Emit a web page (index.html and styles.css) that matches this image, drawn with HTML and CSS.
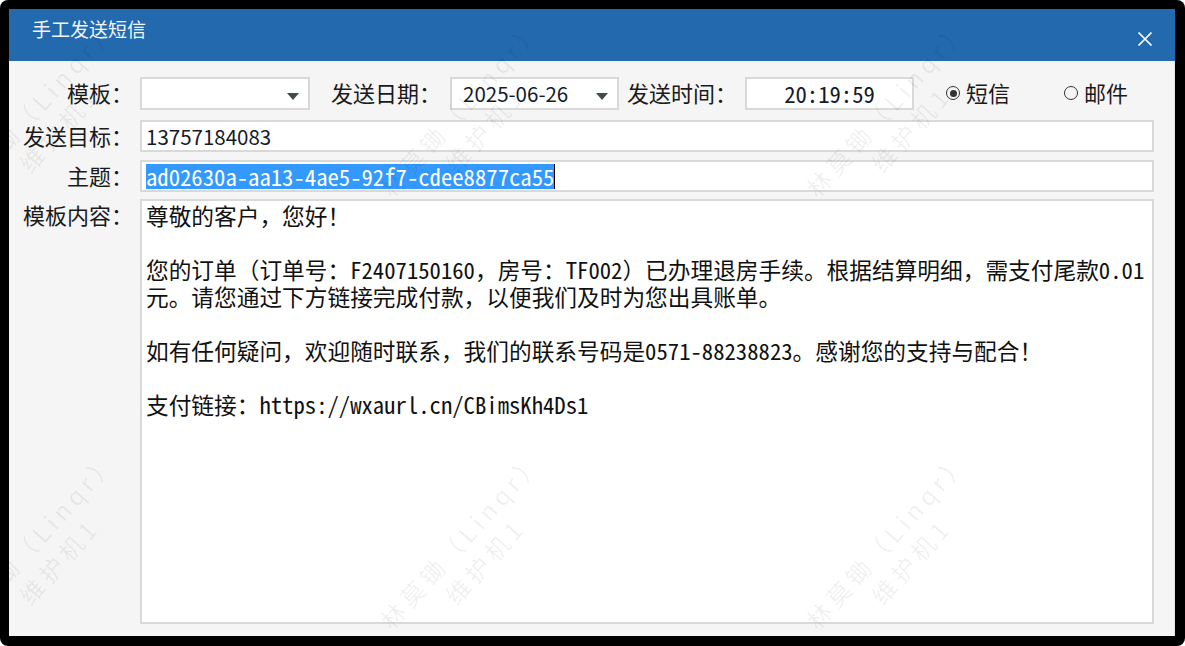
FILE: index.html
```html
<!DOCTYPE html>
<html lang="zh-CN">
<head>
  <meta charset="UTF-8" />
  <title>手工发送短信</title>
  <link rel="stylesheet" href="styles.css">
</head>
<body>

<div class="screen">
  <div class="dialog">

    <!-- TITLE BAR -->
    <div class="title-bar">
      <span class="title">手工发送短信</span>
      <svg class="close-btn" width="16" height="16" viewBox="0 0 16 16">
        <path d="M1.5 1.5 L14.5 14.5 M14.5 1.5 L1.5 14.5" stroke="#fff" stroke-width="1.7" fill="none" />
      </svg>
    </div>

    <!-- FORM -->
    <div class="dialog-body">
      <div class="row row-top">
        <span class="field-label">模板：</span>
        <div class="box combo combo-template"><span class="arrow"></span></div>
        <span class="inline-label label-date">发送日期：</span>
        <div class="box combo combo-date"><span class="value">2025-06-26</span><span class="arrow"></span></div>
        <span class="inline-label label-time">发送时间：</span>
        <div class="box time-box">20:19:59</div>
        <div class="radio-item radio-sms"><span class="radio checked"></span><span>短信</span></div>
        <div class="radio-item radio-mail"><span class="radio"></span><span>邮件</span></div>
      </div>

      <div class="row row-target">
        <span class="field-label">发送目标：</span>
        <div class="box text-box">13757184083</div>
      </div>

      <div class="row row-subject">
        <span class="field-label">主题：</span>
        <div class="box text-box mono"><span class="selected">ad02630a-aa13-4ae5-92f7-cdee8877ca55</span></div>
      </div>

      <div class="row row-content">
        <span class="field-label content-label">模板内容：</span>
        <div class="box content-box mono">尊敬的客户，您好！

您的订单（订单号：F2407150160，房号：TF002）已办理退房手续。根据结算明细，需支付尾款0.01
元。请您通过下方链接完成付款，以便我们及时为您出具账单。

如有任何疑问，欢迎随时联系，我们的联系号码是0571-88238823。感谢您的支持与配合！

支付链接：https://wxaurl.cn/CBimsKh4Ds1</div>
      </div>
    </div>

    <!-- WATERMARK -->
    <div class="watermarks">
      <div class="wm wm-1">林莫锄（Linqr）<br>维护机1</div>
      <div class="wm wm-2">林莫锄（Linqr）<br>维护机1</div>
      <div class="wm wm-3">林莫锄（Linqr）<br>维护机1</div>
      <div class="wm wm-4">林莫锄（Linqr）<br>维护机1</div>
      <div class="wm wm-5">林莫锄（Linqr）<br>维护机1</div>
      <div class="wm wm-6">林莫锄（Linqr）<br>维护机1</div>
    </div>

  </div>
</div>

</body>
</html>
```

FILE: styles.css
```css
html, body {
  margin: 0;
  padding: 0;
  width: 100%;
  height: 100%;
  overflow: hidden;
  background: #fff;
  font-family: "Noto Sans CJK SC", sans-serif;
}

.screen {
  width: 1185px;
  height: 646px;
  box-sizing: border-box;
  background: #000;
  border-radius: 8px;
  padding: 9px 10px 10px 9px;
}

.dialog {
  position: relative;
  width: 1166px;
  height: 627px;
  display: flex;
  flex-direction: column;
  overflow: hidden;
}

/* title bar */
.title-bar {
  height: 52px;
  flex-shrink: 0;
  background: #2369ad;
  display: flex;
  justify-content: space-between;
  align-items: flex-start;
  padding: 7px 22px 0 23px;
  box-sizing: border-box;
}

.title {
  color: #f2f6fa;
  font-size: 19px;
  line-height: 26px;
}

.close-btn {
  margin-top: 15px;
}

/* body */
.dialog-body {
  flex: 1;
  background: #f5f5f5;
  border-right: 1px solid #e2e2e2;
  padding: 16px 20px 12px 12px;
  display: flex;
  flex-direction: column;
  color: #1a1a1a;
}

.row {
  display: flex;
  align-items: center;
}

.row-top { height: 33px; margin-bottom: 10px; }
.row-target { height: 32px; margin-bottom: 8px; }
.row-subject { height: 32px; margin-bottom: 7px; }
.row-content { flex: 1; align-items: stretch; }

.field-label {
  width: 112px;
  flex-shrink: 0;
  margin-right: 7px;
  padding-bottom: 3px;
  text-align: right;
  font-size: 22px;
  white-space: nowrap;
}

.content-label {
  padding-bottom: 0;
  line-height: 30px;
}

.inline-label {
  width: 110px;
  flex-shrink: 0;
  padding-bottom: 3px;
  font-size: 22px;
  white-space: nowrap;
}

.label-date { margin: 0 9px 0 21px; }
.label-time { margin: 0 8px 0 8px; }

.box {
  box-sizing: border-box;
  background: #fff;
  border: 2px solid #d9d9d9;
  height: 100%;
}

.combo {
  position: relative;
  flex-shrink: 0;
  display: flex;
  align-items: center;
}

.combo-template { width: 170px; }
.combo-date { width: 169px; }

.combo .value {
  padding-left: 11px;
  padding-bottom: 2px;
  font-size: 20.5px;
  color: #151a2a;
}

.arrow {
  position: absolute;
  right: 9px;
  top: 14px;
  width: 0;
  height: 0;
  border-left: 6px solid transparent;
  border-right: 6px solid transparent;
  border-top: 7px solid #3f4d45;
}

.time-box {
  width: 169px;
  flex-shrink: 0;
  display: flex;
  align-items: center;
  justify-content: center;
  font-family: "Noto Sans Mono CJK SC", "Liberation Serif", "Noto Sans CJK SC", serif;
  font-size: 22.7px;
  color: #151a2a;
}

.radio-item {
  display: flex;
  align-items: center;
  flex-shrink: 0;
  padding-bottom: 3px;
  font-size: 22px;
}

.radio-sms { margin-left: 32px; }
.radio-mail { margin-left: 54px; }

.radio {
  width: 14px;
  height: 14px;
  flex-shrink: 0;
  box-sizing: border-box;
  border: 1.5px solid #333;
  border-radius: 50%;
  margin: 2px 6px 0 0;
  display: flex;
  align-items: center;
  justify-content: center;
}

.radio.checked::after {
  content: "";
  width: 7px;
  height: 7px;
  border-radius: 50%;
  background: #333;
}

.text-box {
  flex: 1;
  display: flex;
  align-items: center;
  padding-left: 4px;
  font-size: 20.5px;
  color: #151a2a;
}

.mono {
  font-family: "Noto Sans Mono CJK SC", "Liberation Serif", "Noto Sans CJK SC", serif;
  font-size: 22.7px;
}

.selected {
  background: #3399ff;
  color: #fff;
  line-height: 25px;
  border-right: 1px solid #000;
}

.content-box {
  flex: 1;
  padding: 1px 4px;
  line-height: 27px;
  white-space: pre;
  color: #111;
  overflow: hidden;
}

/* watermark over the dialog */
.watermarks {
  position: absolute;
  top: 0;
  left: 0;
  width: 100%;
  height: 100%;
  pointer-events: none;
}

.wm {
  position: absolute;
  width: 280px;
  text-align: center;
  font-size: 24px;
  line-height: 32px;
  letter-spacing: 5px;
  color: rgba(0, 0, 0, 0.065);
  transform: rotate(-48deg);
  white-space: nowrap;
}

.wm-1 { left: -102px; top: 77px; }
.wm-2 { left: 324px; top: 77px; }
.wm-3 { left: 750px; top: 77px; }
.wm-4 { left: -102px; top: 509px; }
.wm-5 { left: 324px; top: 509px; }
.wm-6 { left: 750px; top: 509px; }
```
